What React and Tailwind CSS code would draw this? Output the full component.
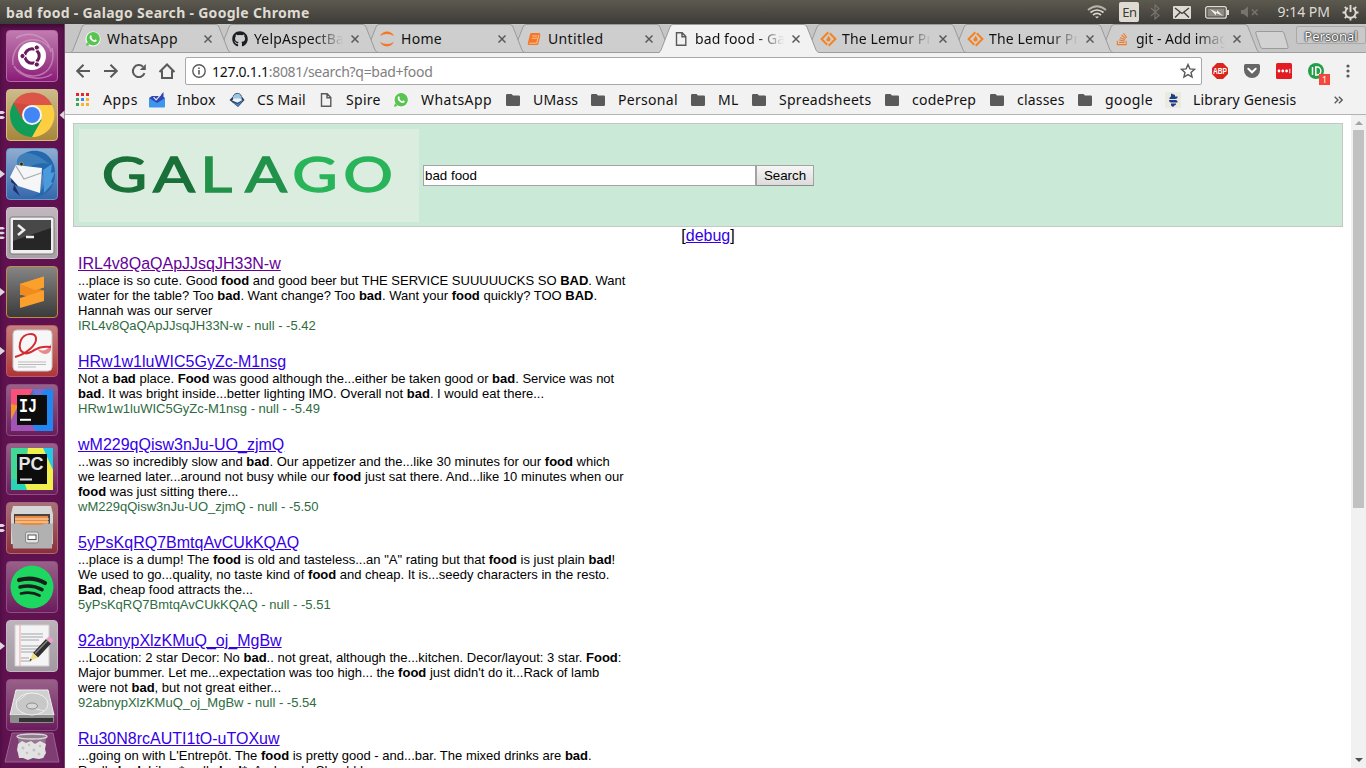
import React from "react";
import { FaGithub, FaStackOverflow } from "react-icons/fa";

const UI = "font-['Noto_Sans',sans-serif]";

/* ---------- small icons ---------- */
const WhatsApp = () => (
  <svg width="16" height="16" viewBox="0 0 16 16">
    <circle cx="8" cy="8" r="7.600" fill="#fff" />
    <path d="M1 15l1-4L4.500 13.800z" fill="#5ac351" />
    <circle cx="8.200" cy="7.800" r="6.700" fill="#5ac351" />
    <path d="M5 4.700c.6-.9 1.300-.7 1.700.5.3.8-.4 1-.2 1.500.5 1.200 1.400 2 2.600 2.500.5.200.8-.9 1.400-.7 1.300.5 1.500.9.900 1.700-1 1.200-2.700.8-4.300-.3C5 8.400 4 6.500 5 4.700z" fill="#fff" />
  </svg>
);
const GitHub = () => <FaGithub size={16} color="#1b1f23" />;
const Jupyter = () => (
  <svg width="16" height="16" viewBox="0 0 16 16" fill="#f37726">
    <path d="M1 5.200C3.500-1 12.500-1 15 5.200 11 2.300 5 2.300 1 5.200zM1 10.800c2.500 6.200 11.500 6.200 14 0-4 2.900-10 2.900-14 0z" />
  </svg>
);
const Book = () => (
  <svg width="16" height="16" viewBox="0 0 16 16">
    <path d="M5.500 2H14l-.3 1.500.8.5-2.200 9q-.3 1-1.300 1H3q-1.500-.4-1.200-1.800L4 3.200Q4.400 2 5.500 2z" fill="#f37726" />
    <path d="M6.300 5h5M5.800 7.300h5M3.300 12.200h7.400L12.800 4" stroke="#fbd7b8" strokeWidth=".8" fill="none" />
  </svg>
);
const FileIcon = () => (
  <svg width="16" height="16" viewBox="0 0 16 16" fill="none" stroke="#5a5a5a" strokeWidth="1.400">
    <path d="M3.500 1.700h5.700l3.600 3.800v8.800H3.500zM9 2v3.700h3.600" />
  </svg>
);
const Lemur = () => (
  <svg width="17" height="16" viewBox="0 0 17 16">
    <path d="M8.300 1.200L1.600 8l5.600 5.800M8.700 14.800L15.400 8 9.800 2.200" fill="none" stroke="#f58220" strokeWidth="2" />
    <path d="M8.400 4.200c.6 2 2.500 2.600 2.200 4.600-.3 2.200-3.800 2.200-4.200.2-.3-1.700 1.900-2 2-4.800z" fill="#f58220" />
  </svg>
);
const Stack = () => <FaStackOverflow size={14} color="#ee7b2d" />;
const AppsIcon = () => (
  <svg width="14" height="14" viewBox="0 0 14 14">
    {["#e8262a", "#e8262a", "#e8262a", "#3aa757", "#4285f4", "#f9b32b", "#3aa757", "#f9b32b", "#f9b32b"].map((c, i) => (
      <rect key={i} x={(i % 3) * 5} y={Math.floor(i / 3) * 5} width="3" height="3" fill={c} />
    ))}
  </svg>
);
const Inbox = () => (
  <svg width="16" height="16" viewBox="0 0 16 16">
    <path d="M0 6l3-2h10l3 2v4H0z" fill="#3048b5" />
    <path d="M2.500 4.800L7 8.800 14.500 0v7L8 12 2.500 9z" fill="#2f45b3" />
    <path d="M4.600 5.200l2.500 2.600 4.500-5" fill="none" stroke="#dfe8fb" strokeWidth="1.200" />
    <path d="M0 6l8 5 8-5v8.500q0 1-1 1H1q-1 0-1-1z" fill="#3d95ee" />
  </svg>
);
const CsMail = () => (
  <svg width="16" height="16" viewBox="0 0 16 16">
    <path d="M.5 8l3-3 9-1 3 4L9 15z" fill="#2b3e55" />
    <path d="M2 9.500l6.500 2.500L14.500 8 9 14.200z" fill="#3f86cf" />
    <path d="M4 8V4.500C5 .5 11 0 12.300 4l.5 3.500L8.500 10z" fill="#9cc6e4" />
    <path d="M3 8.500l5.500 2.200L13.500 8l-3-1.500H5z" fill="#eef5fa" />
    <path d="M4 4.500C5.500.5 11 .3 12.300 4" fill="none" stroke="#42586e" />
  </svg>
);
const Folder = () => (
  <svg width="14" height="12" viewBox="0 0 14 12">
    <path d="M1.200 0H5.500L7 1.600h5.800Q14 1.600 14 2.800v8Q14 12 12.800 12H1.200Q0 12 0 10.800V1.200Q0 0 1.200 0z" fill="#5a5a5a" />
  </svg>
);
const LibGen = () => (
  <svg width="16" height="16" viewBox="0 0 16 16">
    <rect width="16" height="16" fill="#eaeadd" />
    <path d="M6 1.500l4 1.500v1.500h2.500Q13 6.500 10 7H4.500Q4 5 6 4.500zM4 8h6.500q2.500.5 2 2.500H6Q4 10.500 4 8zM6 11.500h5q.5 1.500-1.500 2L8 15l-2-1.500z" fill="#1e3c8c" />
  </svg>
);
const Close = () => (
  <svg width="8" height="8" viewBox="0 0 8 8"><path d="M.5.500l7 7M7.500.500l-7 7" stroke="#5a5a5a" strokeWidth="1.500" /></svg>
);

/* ---------- window bar ---------- */
function TopBar() {
  return (
    <div className={`flex h-6 items-center justify-between bg-linear-to-b from-[#5c594f] to-[#3d3c38] pr-[7px] pl-[6px] text-[#dfdbd2] ${UI}`}>
      <span className="text-[14px] font-bold tracking-[0.3px]">bad food - Galago Search - Google Chrome</span>
      <div className="flex items-center">
        <svg className="mr-[12px]" width="20" height="14" viewBox="0 0 20 14" fill="none" strokeWidth="1.700">
          <path d="M1 5Q10-2.500 19 5" stroke="#b7b3aa" /><path d="M3.500 7.500q6.500-5 13 0" stroke="#dfdbd2" /><path d="M6 10q4-3.200 8 0" stroke="#dfdbd2" /><path d="M8 11.500h4l-2 2z" fill="#dfdbd2" stroke="none" />
        </svg>
        <span className="mr-[11px] flex h-5 w-5 items-center justify-center rounded-[2px] bg-[#dfdbd2] pt-px text-[13px] leading-[19px] tracking-[-0.5px] text-[#3c3b37]">En</span>
        <svg className="mr-[13px]" width="10" height="16" viewBox="0 0 10 16" fill="none" stroke="#77746c" strokeWidth="1.200"><path d="M1 4l8 7.500L5 15V1l4 3.500L1 12" /></svg>
        <svg className="mr-[14px]" width="18" height="13" viewBox="0 0 18 13"><rect width="18" height="13" rx="1" fill="#dfdbd2" /><path d="M2 2l7 5.500L16 2M2 11.500l5-5M16 11.500l-5-5" stroke="#3f3e3a" strokeWidth="1.300" fill="none" /></svg>
        <svg className="mr-[12px]" width="24" height="13" viewBox="0 0 24 13"><rect x=".7" y=".7" width="20.600" height="11.500" rx="2" fill="none" stroke="#dfdbd2" strokeWidth="1.300" /><rect x="22" y="4" width="2" height="5" fill="#dfdbd2" /><rect x="2.500" y="2.500" width="17" height="8" fill="#8d8a82" /><path d="M5 3l7 3.300V4l6 6-7-3v2.500z" fill="#f2efe8" /></svg>
        <svg className="mr-[18px]" width="18" height="12" viewBox="0 0 18 12"><path d="M0 4h2.500L7 .5v11L2.500 8H0z" fill="#77746c" /><path d="M11 3.500l5.500 5.500M16.500 3.500L11 9" stroke="#77746c" strokeWidth="1.500" /></svg>
        <span className="mr-[12px] text-[14px] leading-5">9:14 PM</span>
        <svg width="17" height="17" viewBox="0 0 17 17" fill="none" stroke="#dfdbd2">
          <path d="M6 4a5.200 5.200 0 1 0 5 0" strokeWidth="1.900" /><path d="M8.500 1v7" strokeWidth="1.900" />
          <path d="M.5 8.500h3M13.500 8.500h3M8.500 13.500v3M2.800 2.800l2 2M14.200 2.800l-2 2M2.800 14.200l2-2M14.200 14.200l-2-2" strokeWidth="1.900" />
        </svg>
      </div>
    </div>
  );
}

/* ---------- launcher ---------- */
const TILE = {
  dash: "from-[#c07bb0] to-[#8b1878] border-[#b568a5]",
  chrome: "from-[#cdbb8b] to-[#a8863a] border-[#d3be83]",
  bird: "from-[#8fadd0] to-[#3567ad] border-[#6b98ca]",
  term: "from-[#c2b7be] to-[#a9a0a6] border-[#cbc2c8]",
  subl: "from-[#858585] to-[#3c3c3c] border-[#c58b43]",
  doc: "from-[#c4807e] to-[#b03338] border-[#b3605f]",
  plain: "from-[#986089] to-[#6b1b5d] border-[#8b5280]",
  files: "from-[#a77079] to-[#8b2e3b] border-[#a96a72]",
  edit: "from-[#beb3bb] to-[#a399a2] border-[#c4b9c1]",
};
const art = {
  dash: (
    <>
      <path d="M7 35C4 10 32 2 43 18M46 18c6 24-17 36-34 22M10 8c14-8 32-2 35 14M46 44c-12 8-31 4-38-8" fill="none" stroke="#d7a5cd" strokeOpacity=".6" strokeWidth="1.500" />
      <circle cx="26" cy="26" r="14" fill="#fff" />
      <circle cx="26" cy="26" r="7.200" fill="none" stroke="#6b1a5b" strokeWidth="3" />
      <path d="M26 26L17 26M26 26l5-8.500M26 26l5 8.500" stroke="#fff" strokeWidth="1.500" />
      <circle cx="26" cy="26" r="5" fill="#fff" />
      <g fill="#6b1a5b" stroke="#fff" strokeWidth="1"><circle cx="16.500" cy="26" r="2.600" /><circle cx="30.800" cy="17.500" r="2.600" /><circle cx="30.800" cy="34.500" r="2.600" /></g>
    </>
  ),
  chrome: (
    <>
      <circle cx="26" cy="26" r="22" fill="#109d58" />
      <path d="M26 26L7.500 14A22 22 0 0 1 46 16H26z" fill="#dd5548" />
      <path d="M26 16h20A22 22 0 0 1 26 48l9.500-17z" fill="#fdcd42" />
      <path d="M7.500 14L17 31l9-15z" fill="#cf4a3e" />
      <circle cx="26" cy="26" r="10" fill="#f4f4f4" /><circle cx="26" cy="26" r="8" fill="#4285f4" />
    </>
  ),
  bird: (
    <>
      <path d="M25 3C40 1 50 12 49 27 48 42 38 50 26 49c9-3 15-12 11-21C34 19 24 18 14 19 11 11 17 4 25 3z" fill="#2468ad" />
      <path d="M12 19C8 11 15 4 22 5c10 1 17 8 22 11-9-2-17 1-22 3z" fill="#3f7fb9" />
      <path d="M37 22l9-6-1 9 4-1-4 10 2 1-9 10z" fill="#4b9adb" />
      <path d="M5 34l1-9 6 14zM8 36l6 12-7-6z" fill="#1c2f6c" />
      <path d="M10 17l26 3-2 25-22-7L4 29z" fill="#f5f6f7" />
      <path d="M10 18l8 13 17-6" fill="none" stroke="#aaa" strokeWidth="1.200" />
      <circle cx="15.500" cy="16" r="1.800" fill="#252525" stroke="#c9b65b" strokeWidth=".6" />
    </>
  ),
  term: (
    <>
      <rect x="4" y="10" width="44" height="37" rx="2" fill="#efefef" stroke="#777" />
      <rect x="7" y="13" width="38" height="30" fill="#262626" /><path d="M7 13h38v8L7 34z" fill="#484848" />
      <path d="M12 18l6 5-6 5M20 30h8" fill="none" stroke="#eee" strokeWidth="2.500" />
    </>
  ),
  subl: (
    <>
      <path d="M14 18l24-7.500v11L14 29z" fill="#fba02c" /><path d="M14 18v10.500l24 6.500V24.500z" fill="#f08c1f" /><path d="M38 24.500V35L14 42V32z" fill="#fba02c" /><path d="M14 18l24-7.500v10.500l-9 3z" fill="#fba02c" />
    </>
  ),
  doc: (
    <>
      <rect x="7" y="5" width="39" height="41" rx="4" fill="#f7f7f7" stroke="#c8c8c8" />
      <path d="M31 24C38 27 42 25 45 19v6c-3 6-9 5-14-1z" fill="#e88a8b" />
      <path d="M9 32C20 29 31 20 30 13c-1-6-12-5-15 2-4 10 2 16 10 12 7-4 10-6 20-5" fill="none" stroke="#d52b30" strokeWidth="2" />
      <path d="M12 37h28M12 39.500h28M12 42h18" stroke="#bbb" />
    </>
  ),
  ij: (
    <>
      <path d="M5 5h22L12 30H5z" fill="#f9507b" /><path d="M5 20l9 2-6 18H5z" fill="#f2932c" /><path d="M27 5h20v42H25z" fill="#1f86f2" /><path d="M27 5h12l-8 12z" fill="#6d70d0" /><path d="M5 36l7-14 18 25H5z" fill="#a055b4" />
      <rect x="11" y="11" width="30" height="30" fill="#0c0c0c" />
      <path d="M14 35.800h11" stroke="#fff" strokeWidth="2" />
      <text x="13" y="28" fontFamily="Liberation Mono" fontWeight="700" fontSize="20" textLength="18" lengthAdjust="spacingAndGlyphs" fill="#fff">IJ</text>
    </>
  ),
  pc: (
    <>
      <path d="M5 5h42v42H5z" fill="#40d895" /><path d="M22 5h16l9 10v32H12l6-10z" fill="#eff04b" /><path d="M37 5h10v22z" fill="#23c9e8" /><path d="M5 36h12l4 11H5z" fill="#29d4b2" />
      <rect x="11" y="11" width="30" height="30" fill="#0c0c0c" />
      <path d="M14 36.500h12" stroke="#ddd" strokeWidth="2" />
      <text x="12.500" y="27" fontFamily="Liberation Sans" fontWeight="700" fontSize="17.500" textLength="25" lengthAdjust="spacingAndGlyphs" fill="#e5e5e5">PC</text>
    </>
  ),
  files: (
    <>
      <path d="M7 4h38l2 8v30H5V12z" fill="#d6d6d6" /><path d="M8 12h36v14H8z" fill="#4a4341" />
      <path d="M9 14h33v10H9z" fill="#e98b3d" /><path d="M9 17h34M9 20h34" stroke="#fae3cd" strokeWidth="1.200" />
      <path d="M5 21.500h9l2 1.500h20l2-1.500h9l-1 25H7z" fill="#b1b1b1" />
      <rect x="19.500" y="30" width="13" height="11" rx="2" fill="#e2e2e2" stroke="#8a8a8a" /><rect x="22" y="33" width="8" height="4.500" fill="#fff" stroke="#555" />
    </>
  ),
  spot: (
    <>
      <circle cx="26" cy="26" r="21.500" fill="#1ed760" />
      <g fill="none" stroke="#18201b" strokeLinecap="round"><path d="M13 19c9-2.500 18-1.800 26 3" strokeWidth="4.200" /><path d="M14 26c8-2 15-1.200 22 2.600" strokeWidth="3.500" /><path d="M15 32.500c7-1.500 13-1 18.500 2" strokeWidth="2.800" /></g>
    </>
  ),
  edit: (
    <>
      <path d="M9 5h34v41H9z" fill="#f4f4f4" stroke="#cfcfcf" />
      <path d="M14 5v41" stroke="#efa5a5" /><path d="M15 14h22M15 17h22M15 20h18M15 26h22M15 29h20M15 32h14M15 38h8M15 41h10" stroke="#a2a5ad" strokeWidth="1" />
      <path d="M27 33L40 19l5 4.500-13 14z" fill="#303030" /><path d="M29 33.500L41.500 20.500" stroke="#8a8a8a" strokeWidth="1.200" /><path d="M27 33l5 4.500-8.500 3.500z" fill="#efdf7e" /><path d="M23.500 41l1-2.500 1.500 1.500z" fill="#222" /><path d="M40 19l3-2.500q2 0 4.500 4L45 23.500z" fill="#eba1cb" />
    </>
  ),
  disk: (
    <>
      <path d="M10 11h32l6 25H4z" fill="#d0d0d0" stroke="#eee" /><path d="M4 36h44v7q0 1-2 1H6q-2 0-2-1z" fill="#8d8d8d" /><path d="M13 39h34v4H13z" fill="#333" />
      <ellipse cx="26" cy="25" rx="16" ry="11" fill="#c8c8c8" stroke="#f1f1f1" /><ellipse cx="26" cy="27" rx="5.500" ry="3" fill="#d8d8d8" stroke="#8e8e8e" /><path d="M12 22l9-7M30 30l9 2" stroke="#e9e9e9" />
    </>
  ),
};
const dock = [
  ["dash", "dash", 0], ["chrome", "chrome", 2], ["bird", "bird", 1], ["term", "term", 3], ["subl", "subl", 1], ["doc", "doc", 1],
  ["plain", "ij", 0], ["plain", "pc", 0], ["files", "files", 2], ["plain", "spot", 0], ["edit", "edit", 1], ["plain", "disk", 0],
];
function Launcher() {
  return (
    <div className="flex w-[65px] shrink-0 flex-col items-center gap-[7px] border-r border-[#7d4073] bg-[#5f1150] pt-[6px] shadow-[inset_0_3px_4px_rgba(0,0,0,0.35)]">
      {dock.map(([tile, name, pips], i) => (
        <div key={i} className={`relative h-[52px] w-[52px] shrink-0 rounded-[4px] border bg-linear-to-b ${TILE[tile]}`}>
          <svg className="absolute -top-px -left-px" width="52" height="52" viewBox="0 0 52 52">{art[name]}</svg>
          <svg className="absolute top-[17px] -left-[7px]" width="5" height="16" viewBox="0 0 5 16" fill="#ddd6da">
            {pips === 1 && <path d="M0 4l5 4-5 4z" />}
            {pips === 2 && <path d="M0 4h3l2 1.500L3 7H0zM0 9h3l2 1.500L3 12H0z" />}
            {pips === 3 && <path d="M0 2h3l2 1.300L3 4.600H0zM0 6.700h3L5 8 3 9.300H0zM0 11.400h3l2 1.300-2 1.300H0z" />}
          </svg>
          {name === "chrome" && <svg className="absolute top-[20px] left-[52px]" width="6" height="10" viewBox="0 0 6 10"><path d="M5.500.5v9L.5 5z" fill="#ddd6da" /></svg>}
        </div>
      ))}
      <svg className="-mt-[6px] shrink-0" width="58" height="31" viewBox="0 0 58 31">
        <path d="M9 1h41l6 29H2z" fill="#7f3d73" stroke="#97648e" />
        <path d="M15 5h28l-2 21H17z" fill="#97778f" /><ellipse cx="29" cy="4.500" rx="15" ry="2.500" fill="#8f7f8b" stroke="#dcd6da" strokeWidth="1.300" />
        <path d="M15 12l4-3 4 2 5-2 4 3 5-3 6 3-1 5 1 4-3 5-4 1-6-1-5 2-5-2-4 0-1-5-1-3z" fill="#e2e2e2" />
        <g fill="#c3c3c3"><circle cx="20" cy="16" r="1.500" /><circle cx="26" cy="13" r="1.200" /><circle cx="31" cy="18" r="1.600" /><circle cx="37" cy="14" r="1.300" /><circle cx="24" cy="21" r="1.300" /><circle cx="36" cy="22" r="1.500" /></g>
      </svg>
    </div>
  );
}

/* ---------- browser chrome ---------- */
const tabs = [
  { icon: WhatsApp, label: "WhatsApp", z: "z-[8]", t: "tracking-[0.45px]" },
  { icon: GitHub, label: "YelpAspectBased", fade: true, z: "z-[7]", t: "tracking-[0.15px]" },
  { icon: Jupyter, label: "Home", z: "z-[6]", t: "tracking-[0.3px]" },
  { icon: Book, label: "Untitled", z: "z-[5]", t: "tracking-[0.35px]" },
  { icon: FileIcon, label: "bad food - Galago", fade: true, active: true, z: "z-[9]", t: "tracking-[0.1px]" },
  { icon: Lemur, label: "The Lemur Project", fade: true, z: "z-[4]", t: "tracking-[0.15px]" },
  { icon: Lemur, label: "The Lemur Project", fade: true, z: "z-[3]", t: "tracking-[0.15px]" },
  { icon: Stack, label: "git - Add image", fade: true, z: "z-[2]", t: "tracking-[0px]" },
];
function TabStrip() {
  return (
    <div className="relative flex h-[29px] border-b border-[#9f9f9f] bg-[#c6c6c6] pl-[6px]">
      {tabs.map(({ icon: Icon, label, fade, active, z, t }, i) => (
        <div key={i} className={`relative flex h-[29px] w-[147px] shrink-0 items-center pl-[13px] ${z}`}>
          <svg className="absolute top-0 left-0" width="161" height="29" viewBox="0 0 161 29">
            <path d="M0 28.500Q1 28 2 26L11 3Q12 .5 14 .5H145Q147 .5 148 3L157 26Q158 28 160 28.500V29H0z" fill={active ? "#f2f2f2" : "#cecece"} />
            <path d={active ? "M0 28.500Q1 28 2 26L11 3Q12 .5 14 .5H145Q147 .5 148 3L157 26Q158 28 160 28.500" : "M0 28.500Q1 28 2 26L11 3Q12 .5 14 .5H145Q147 .5 148 3L157 26Q158 28 160 28.500z"} fill="none" stroke="#9b9b9b" />
          </svg>
          <span className="relative flex h-4 w-[18px] items-center justify-center"><Icon /></span>
          <span className={`relative ml-[5px] w-[90px] overflow-hidden text-[14px] whitespace-nowrap text-[#111] ${t} ${fade ? "mask-r-from-68% mask-r-to-99%" : ""}`}>{label}</span>
          <span className="relative ml-[7px]"><Close /></span>
        </div>
      ))}
      <svg className="mt-[7px] ml-[8px] shrink-0" width="34" height="18" viewBox="0 0 34 18"><path d="M2 .5h25q1.500 0 2 1.500l4 13.500q.5 2-1 2H8q-2 0-2.500-1.500L.8 2.500Q.3.500 2 .500z" fill="#d2d2d2" stroke="#9b9b9b" /></svg>
      <div className="mt-[2px] ml-[7px] flex h-[18px] w-[70px] shrink-0 items-center justify-center rounded-[2px] border border-[#a9a9a9] bg-[#c9c9c9] pt-[2px] text-[13px] leading-[16px] text-white [text-shadow:0_0_1px_#333,0_0_1px_#333,0_0_2px_#333,0_0_2px_#444]">Personal</div>
    </div>
  );
}

function Toolbar() {
  return (
    <div className="flex h-[36px] shrink-0 items-center bg-[#f2f2f2]">
      <svg className="ml-[10px]" width="104" height="20" viewBox="0 0 104 20" fill="none" stroke="#5a5a5a" strokeWidth="2">
        <path d="M15 10H2.500M8.500 3.700L2.200 10l6.300 6.300M29 10h12.500M35.500 3.700L41.800 10l-6.300 6.300" />
        <path d="M69.500 12.200a6 6 0 1 1-1.500-6.500" /><path d="M70.800 3v6h-6z" fill="#5a5a5a" stroke="none" />
        <path d="M84.500 11l7.500-7.500 7.500 7.500M87 9.500V17h10V9.500" />
      </svg>
      <div className="ml-[6px] flex h-[28px] w-[1017px] items-center rounded-[2px] border border-[#a8a8a8] bg-white pr-[5px] pl-[6px]">
        <svg width="14" height="14" viewBox="0 0 14 14" fill="none" stroke="#5a5a5a"><circle cx="7" cy="7" r="6.200" strokeWidth="1.400" /><path d="M7 6v4.500M7 3.500V5" strokeWidth="1.600" /></svg>
        <span className="ml-[6px] flex-1 text-[14px] tracking-[-0.29px] text-[#808080]"><span className="text-[#111]">127.0.1.1</span>:8081/search?q=bad+food</span>
        <svg width="16" height="16" viewBox="0 0 16 16" fill="none" stroke="#5a5a5a" strokeWidth="1.400"><path d="M8 1.500l1.900 4.400 4.700.4-3.600 3.100 1.100 4.700L8 11.600l-4.100 2.500L5 9.400 1.400 6.300l4.700-.4z" /></svg>
      </div>
      <div className="ml-[10px] flex items-center">
        <svg width="16" height="16" viewBox="0 0 16 16"><path d="M5 0h6l5 5v6l-5 5H5l-5-5V5z" fill="#d9261c" /><text x="1" y="11" fontFamily="Liberation Sans" fontSize="8.500" fontWeight="700" textLength="14" lengthAdjust="spacingAndGlyphs" fill="#fff">ABP</text></svg>
        <svg className="ml-[16px]" width="16" height="14" viewBox="0 0 16 14"><path d="M1.500 0h13Q16 0 16 1.500V6a8 8 0 0 1-16 0V1.500Q0 0 1.500 0z" fill="#666" /><path d="M4.300 4.800L8 8.300l3.700-3.500" fill="none" stroke="#fff" strokeWidth="2" strokeLinecap="round" /></svg>
        <svg className="ml-[16px]" width="16" height="16" viewBox="0 0 16 16"><rect width="16" height="16" rx="1.500" fill="#e31b23" /><g fill="#fff"><circle cx="3" cy="8" r="1.400" /><circle cx="6.800" cy="8" r="1.400" /><circle cx="10.600" cy="8" r="1.400" /><rect x="13.300" y="5.800" width="1" height="4.400" /></g></svg>
        <span className="relative ml-[16px] h-4 w-4">
          <svg width="16" height="16" viewBox="0 0 16 16"><circle cx="8" cy="8" r="8" fill="#23a047" /><path d="M4.500 4v8M7.800 12V4h1.500a3.500 4 0 0 1 0 8z" stroke="#fff" strokeWidth="1.500" fill="none" /></svg>
          <span className="absolute top-[11px] left-[11px] flex h-[11px] w-[11px] items-center justify-center bg-[#f5473b] text-[9px] text-white">1</span>
        </span>
        <svg className="ml-[22px]" width="4" height="14" viewBox="0 0 4 14" fill="#5a5a5a"><circle cx="2" cy="2" r="1.600" /><circle cx="2" cy="7" r="1.600" /><circle cx="2" cy="12" r="1.600" /></svg>
      </div>
    </div>
  );
}

const bookmarks = [
  [AppsIcon, "Apps", "w-[74px]", "tracking-[0.5px]"], [Inbox, "Inbox", "w-[80px]", "tracking-[0.2px]"], [CsMail, "CS Mail", "w-[89px]", "tracking-[0.1px]"],
  [FileIcon, "Spire", "w-[75px]", "tracking-[0.3px]"], [WhatsApp, "WhatsApp", "w-[112px]", "tracking-[0.45px]"], [Folder, "UMass", "w-[85px]", "tracking-[0.2px]"],
  [Folder, "Personal", "w-[100px]", "tracking-[0.3px]"], [Folder, "ML", "w-[61px]", "tracking-[0.2px]"], [Folder, "Spreadsheets", "w-[133px]", "tracking-[0.28px]"],
  [Folder, "codePrep", "w-[105px]", "tracking-[0.25px]"], [Folder, "classes", "w-[88px]", "tracking-[0.2px]"], [Folder, "google", "w-[88px]", "tracking-[0.4px]"],
  [LibGen, "Library Genesis", "w-[150px]", "tracking-[0.15px]"],
];
function Bookmarks() {
  return (
    <div className="flex h-[26px] shrink-0 items-center border-b border-[#b3b3b3] bg-[#f2f2f2] pb-[4px] pl-[10px]">
      {bookmarks.map(([Icon, label, w, t]) => (
        <div key={label} className={`flex shrink-0 items-center ${w}`}>
          <span className="flex w-4 shrink-0 justify-center"><Icon /></span>
          <span className={`ml-[12px] text-[14px] whitespace-nowrap text-[#111] ${t}`}>{label}</span>
        </div>
      ))}
      <svg className="ml-[19px]" width="9" height="8" viewBox="0 0 9 8" fill="none" stroke="#5a5a5a" strokeWidth="1.400"><path d="M.7.700L4 4 .7 7.300M4.900.700L8.200 4 4.900 7.300" /></svg>
    </div>
  );
}

/* ---------- page ---------- */
const results = [
  { id: "IRL4v8QaQApJJsqJH33N-w", score: "-5.42", visited: true, lines: ["...place is so cute. Good *food* and good beer but THE SERVICE SUUUUUCKS SO *BAD*. Want", "water for the table? Too *bad*. Want change? Too *bad*. Want your *food* quickly? TOO *BAD*.", "Hannah was our server"] },
  { id: "HRw1w1luWIC5GyZc-M1nsg", score: "-5.49", lines: ["Not a *bad* place. *Food* was good although the...either be taken good or *bad*. Service was not", "*bad*. It was bright inside...better lighting IMO. Overall not *bad*. I would eat there..."] },
  { id: "wM229qQisw3nJu-UO_zjmQ", score: "-5.50", lines: ["...was so incredibly slow and *bad*. Our appetizer and the...like 30 minutes for our *food* which", "we learned later...around not busy while our *food* just sat there. And...like 10 minutes when our", "*food* was just sitting there..."] },
  { id: "5yPsKqRQ7BmtqAvCUkKQAQ", score: "-5.51", lines: ["...place is a dump! The *food* is old and tasteless...an \"A\" rating but that *food* is just plain *bad*!", "We used to go...quality, no taste kind of *food* and cheap. It is...seedy characters in the resto.", "*Bad*, cheap food attracts the..."] },
  { id: "92abnypXlzKMuQ_oj_MgBw", score: "-5.54", lines: ["...Location: 2 star Decor: No *bad*.. not great, although the...kitchen. Decor/layout: 3 star. *Food*:", "Major bummer. Let me...expectation was too high... the *food* just didn't do it...Rack of lamb", "were not *bad*, but not great either..."] },
  { id: "Ru30N8rcAUTI1tO-uTOXuw", score: "-5.55", lines: ["...going on with L'Entrepôt. The *food* is pretty good - and...bar. The mixed drinks are *bad*.", "Really *bad*. Like, ∗really *bad*∗. And yeah. Should I..."] },
];
const rich = (s) => s.split("*").map((p, i) => (i % 2 ? <b key={i}>{p}</b> : p.replaceAll("∗", "*")));

function Page() {
  return (
    <div className="flex min-h-0 flex-1 bg-white font-['Liberation_Sans',Arial,sans-serif] text-black">
      <div className="min-w-0 flex-1 overflow-hidden px-2 pt-2">
        <div className="flex h-[104px] items-center border border-[#c6c6c6] bg-[#cbe9d7] pl-[4px]">
          <svg className="mt-px shrink-0" width="341" height="93" viewBox="0 0 341 93">
            <rect x="1" width="340" height="93" fill="#daeddf" />
            <text transform="translate(0 63) scale(1.280 1)" fontFamily="Lato" fontSize="48.500" strokeWidth="1.300">
              <tspan x="18.500 58.700" fill="#1a7039" stroke="#1a7039">GA</tspan>
              <tspan x="95.500 130.400" fill="#22924a" stroke="#22924a">LA</tspan>
              <tspan x="167.300 207.300" fill="#29b45a" stroke="#29b45a">GO</tspan>
            </text>
          </svg>
          <input readOnly value="bad food" className="ml-[4px] h-[21px] w-[333px] border border-[#a3a3a3] bg-white px-px text-[13.333px] outline-none" />
          <button className="h-[21px] w-[58px] border border-[#a3a3a3] border-b-[#8b8b8b] bg-linear-to-b from-[#f6f6f6] to-[#dcdcdc] pt-px text-[13.333px] leading-[18px]">Search</button>
        </div>
        <div className="text-center text-[16px] leading-[18px]">[<a className="text-[#3500e6] underline">debug</a>]</div>
        <div className="mt-[10px] ml-[5px] flex w-[560px] flex-col gap-[20px]">
          {results.map((r) => (
            <div key={r.id} className="text-[13px] leading-[15px] whitespace-nowrap">
              <div className="text-[16px] leading-[18px]"><a className={`underline ${r.visited ? "text-[#660099]" : "text-[#3500e6]"}`}>{r.id}</a></div>
              {r.lines.map((l, i) => <div key={i}>{rich(l)}</div>)}
              <div className="text-[#2e6b41]">{r.id} - null - {r.score}</div>
            </div>
          ))}
        </div>
      </div>
      <div className="flex w-[15px] shrink-0 flex-col items-center bg-[#f1f1f1]">
        <svg className="mt-[6px] shrink-0" width="8" height="4" viewBox="0 0 8 4"><path d="M4 0l4 4H0z" fill="#a3a3a3" /></svg>
        <div className="mt-[5px] h-[378px] w-[11px] shrink-0 bg-[#c1c1c1]" />
        <svg className="mt-auto mb-[6px] shrink-0" width="8" height="4" viewBox="0 0 8 4"><path d="M0 0h8L4 4z" fill="#505050" /></svg>
      </div>
    </div>
  );
}

export default function App() {
  return (
    <div className="flex h-[768px] w-[1366px] flex-col overflow-hidden">
      <TopBar />
      <div className="flex min-h-0 flex-1">
        <Launcher />
        <div className="flex min-w-0 flex-1 flex-col">
          <div className={UI}>
            <TabStrip />
            <Toolbar />
            <Bookmarks />
          </div>
          <Page />
        </div>
      </div>
    </div>
  );
}
